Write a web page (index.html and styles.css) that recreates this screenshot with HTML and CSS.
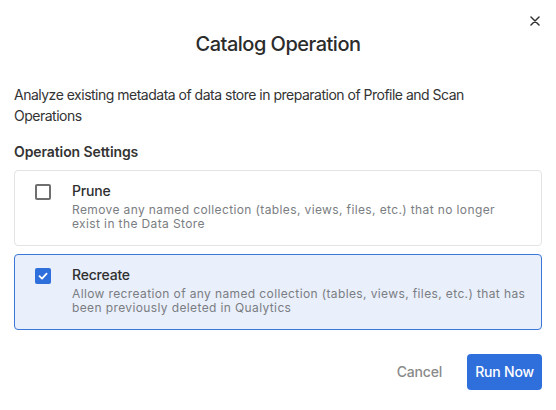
FILE: index.html
```html
<!DOCTYPE html>
<html lang="en">
<head>
<meta charset="utf-8">
<title>Catalog Operation</title>
<link rel="stylesheet" href="styles.css">
</head>
<body>
<div class="dialog">
  <button class="close" aria-label="Close">
    <svg width="10" height="10" viewBox="0 0 10 10"><path d="M1 1L9 9M9 1L1 9" stroke="#333" stroke-width="1.5" stroke-linecap="round"/></svg>
  </button>
  <h2 class="title">Catalog Operation</h2>
  <p class="desc">Analyze existing metadata of data store in preparation of Profile and Scan Operations</p>
  <h3 class="section">Operation Settings</h3>
  <div class="options">
    <label class="option">
      <span class="box"></span>
      <span class="text">
        <span class="name">Prune</span>
        <span class="info">Remove any named collection (tables, views, files, etc.) that no longer <span class="keep">exist in the Data Store</span></span>
      </span>
    </label>
    <label class="option selected">
      <span class="box">
        <svg width="12" height="12" viewBox="0 0 12 12"><path d="M2.5 6.2L5 8.6L9.6 3.6" fill="none" stroke="#fff" stroke-width="1.8" stroke-linecap="round" stroke-linejoin="round"/></svg>
      </span>
      <span class="text">
        <span class="name">Recreate</span>
        <span class="info">Allow recreation of any named collection (tables, views, files, etc.) that has been previously deleted in Qualytics</span>
      </span>
    </label>
  </div>
  <div class="actions">
    <button class="btn cancel">Cancel</button>
    <button class="btn primary">Run Now</button>
  </div>
</div>
</body>
</html>
```
FILE: styles.css
```css
* { box-sizing: border-box; }
html, body { margin: 0; padding: 0; background: #fff; }
body { font-family: Inter, "Noto Sans", sans-serif; color: #2f2f2f; }

.dialog {
  position: relative;
  width: 556px;
  height: 410px;
  padding: 30px 14px 0;
}

.close {
  position: absolute;
  top: 16px;
  left: 530px;
  width: 10px;
  height: 10px;
  padding: 0;
  border: 0;
  background: none;
  display: flex;
}

.title {
  margin: 0;
  text-align: center;
  font-size: 20px;
  line-height: 28px;
  font-weight: 500;
  letter-spacing: -0.5px;
  color: #2b2b2b;
}

.desc {
  max-width: 480px;
  margin: 26px 0 0;
  font-size: 14px;
  line-height: 21px;
  letter-spacing: -0.5px;
  color: #333;
}

.section {
  margin: 15px 0 0;
  font-size: 14px;
  line-height: 21px;
  font-weight: 600;
  letter-spacing: -0.1px;
  color: #333;
}

.options {
  margin-top: 8px;
  display: flex;
  flex-direction: column;
  gap: 8px;
}

.option {
  display: flex;
  gap: 21px;
  padding: 10px 12px 13px 20px;
  border: 1px solid #e3e3e3;
  border-radius: 4px;
  background: #fff;
}

.option.selected {
  border-color: #3a76d8;
  background: #e9effb;
}

.box {
  flex: none;
  width: 16px;
  height: 16px;
  margin-top: 3px;
  border: 2px solid #6f6f6f;
  border-radius: 2px;
  display: flex;
  align-items: center;
  justify-content: center;
}

.selected .box {
  border: 0;
  background: #2f6fdb;
}

.text {
  display: flex;
  flex-direction: column;
  gap: 2px;
}

.name {
  font-size: 14px;
  line-height: 20px;
  font-weight: 500;
  letter-spacing: -0.2px;
  color: #2f2f2f;
}

.info {
  font-size: 12px;
  line-height: 14.4px;
  letter-spacing: 0.38px;
  color: #7a7d82;
}

.keep { white-space: nowrap; }

.actions {
  margin-top: 24px;
  display: flex;
  justify-content: flex-end;
  align-items: center;
  gap: 9px;
}

.btn {
  height: 36px;
  border: 0;
  border-radius: 4px;
  font-family: inherit;
  font-size: 14px;
  font-weight: 500;
  letter-spacing: -0.2px;
  background: none;
}

.cancel {
  padding: 0 16px;
  color: #8a8a8a;
}

.primary {
  width: 75px;
  padding: 0;
  background: #2f6fdb;
  color: #fff;
}
```
